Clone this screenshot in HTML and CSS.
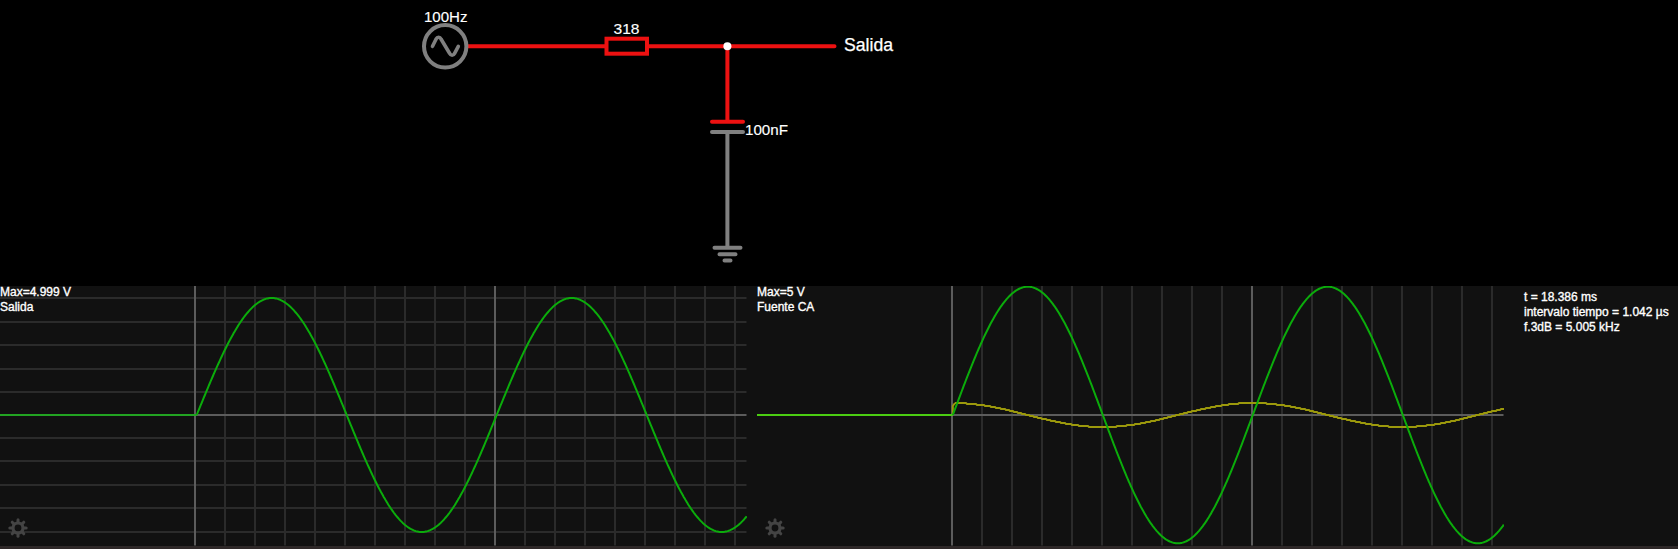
FILE: index.html
```html
<!DOCTYPE html>
<html lang="es">
<head>
<meta charset="utf-8">
<title>Simulador de circuitos</title>
<link rel="stylesheet" href="styles.css">
</head>
<body>
<main class="simulator">
  <svg class="circuit" viewBox="0 0 1678 286">
    <g class="wire live">
      <path d="M467 46.3H606M648 46.3H834.5M727.4 46.3V121M712 121.7H743"/>
      <rect x="606.5" y="38.7" width="40.5" height="15" stroke-linejoin="miter"/>
    </g>
    <g class="wire idle">
      <circle cx="445.2" cy="46.3" r="21.2"/>
      <path stroke-width="3.6" stroke-linejoin="round" d="M432.5 46.3L436 39.2Q437 37.3 438.6 37.3T441 39L449.7 53.5Q450.6 55.3 452.1 55.3T454.600 53.400L458.300 46.300"/>
      <path d="M712 132H743M727.4 132V247M714.5 247.7H740.5M719.5 254.2H735.5M724.5 260.5H730.5"/>
    </g>
    <circle class="node" cx="727.4" cy="46.3" r="4"/>
    <text class="label" x="424" y="22" textLength="43.5" lengthAdjust="spacingAndGlyphs">100Hz</text>
    <text class="label" x="613.5" y="34" textLength="26" lengthAdjust="spacingAndGlyphs">318</text>
    <text class="label" x="745" y="135" textLength="43" lengthAdjust="spacingAndGlyphs">100nF</text>
    <text class="label output" x="844" y="51" textLength="49" lengthAdjust="spacingAndGlyphs">Salida</text>
  </svg>
  <section class="scopes">
    <div class="scope">
      <svg class="plot" data-plot="output" viewBox="0 286 747 260"></svg>
      <p class="caption">Max=4.999 V<br>Salida</p>
    </div>
    <div class="scope">
      <svg class="plot" data-plot="source" viewBox="0 286 747 260"></svg>
      <p class="caption">Max=5 V<br>Fuente CA</p>
    </div>
    <p class="info">t = 18.386 ms<br>intervalo tiempo = 1.042 µs<br>f.3dB = 5.005 kHz</p>
  </section>
</main>
<script src="plots.js"></script>
</body>
</html>
```

FILE: styles.css
```css
* { box-sizing: border-box; }
body { margin: 0; background: #000; color: #fff; font-family: "Liberation Sans", Arial, sans-serif; overflow: hidden; }
p { margin: 0; }
.simulator { display: flex; flex-direction: column; width: 1678px; height: 549px; }
.circuit { display: block; width: 1678px; height: 286px; }
.wire { fill: none; stroke-width: 4; stroke-linecap: round; }
.wire.live { stroke: #ed1111; }
.wire.idle { stroke: #808080; }
.node { fill: #fff; }
.label { fill: #fff; font-size: 15.5px; stroke: #fff; stroke-width: 0.15px; }
.label.output { font-size: 18px; stroke-width: 0.25px; }
.scopes { display: flex; gap: 10px; height: 263px; background: #111; border-bottom: 3px solid #2e2828; }
.scope { position: relative; width: 747px; height: 260px; }
.plot { display: block; width: 747px; height: 260px; }
.caption { position: absolute; left: 0; top: -1px; }
.caption, .info { font-size: 12px; line-height: 15px; -webkit-text-stroke: 0.35px #fff; white-space: nowrap; }
.info { padding: 4px 0 0 10px; }
.grid { stroke: #2b2b2b; stroke-width: 2; }
.axis { stroke: #5c5c5c; stroke-width: 2; }
.trace { fill: none; stroke-width: 2; stroke-linejoin: round; }
.trace.voltage { stroke: #0bac0b; }
.trace.current { stroke: #9c990c; }
.trace.flat { stroke: #22a422; }
.trace.flat.bright { stroke: #4bcd12; }
.gear { fill: none; stroke: #444; }
```

FILE: plots.js
```js
const MID = 415;
const GEAR = '<g class="gear" transform="translate(18 528)"><circle r="5" stroke-width="3.2"/>' +
  [0, 45, 90, 135, 180, 225, 270, 315]
    .map(a => `<path d="M0 -5.500V-8.200" stroke-width="3" stroke-linecap="round" transform="rotate(${a})"/>`).join('') + '</g>';

function line(cls, x1, y1, x2, y2) {
  return `<line class="${cls}" x1="${x1}" y1="${y1}" x2="${x2}" y2="${y2}"/>`;
}

function wave(cls, start, fn) {
  const points = [];
  for (let x = start; x <= 747; x += 1) points.push(`${x.toFixed(1)},${fn(x).toFixed(1)}`);
  return `<polyline class="trace ${cls}" points="${points.join(' ')}"/>`;
}

document.querySelectorAll('.plot').forEach(plot => {
  const source = plot.dataset.plot === 'source';
  let out = '';
  if (!source) [298, 322, 345, 369, 392, 438, 461, 485, 508, 532].forEach(y => { out += line('grid', 0, y, 746.5, y); });
  for (let x = 195; x < 747; x += 30) out += line((x - 195) % 300 ? 'grid' : 'axis', x, 286, x, 545.5);
  out += line('axis', 0, MID, 746.5, MID);
  const start = source ? 195.8 : 196.7;
  const phase = x => (x - start) * Math.PI / 150;
  if (source) {
    out += `<path class="trace current" d="M195.8 415V406L198 403"/>`;
    out += wave('current', 198, x => MID - Math.round(12 * Math.cos(phase(x))));
  }
  out += `<path class="trace flat${source ? ' bright' : ''}" d="M0 415H${start}"/>`;
  out += wave('voltage', start, x => MID - (source ? 128.3 : 117) * Math.sin(phase(x)));
  plot.innerHTML = out + GEAR;
});
```
